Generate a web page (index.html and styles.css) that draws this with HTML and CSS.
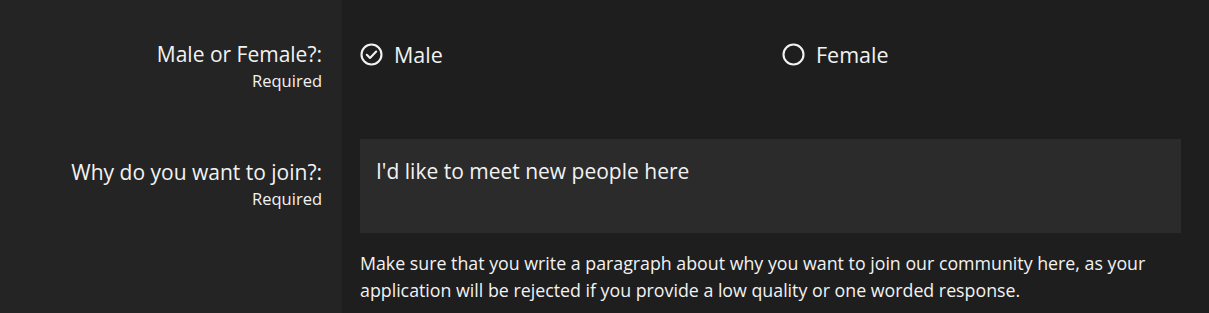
FILE: index.html
```html
<!DOCTYPE html>
<html>
<head>
<meta charset="utf-8">
<link rel="stylesheet" href="styles.css">
</head>
<body>
<div class="form">
  <div class="row row-radio">
    <div class="label">
      <div class="title">Male or Female?:</div>
      <div class="req">Required</div>
    </div>
    <div class="field">
      <div class="radios">
        <div class="radio">
          <svg class="icon" viewBox="0 0 23 23" width="23" height="23"><circle cx="11.5" cy="11.5" r="10" fill="none" stroke="#f2f2f2" stroke-width="2.1"/><path d="M6.8 11.8 L10 14.9 L16.2 8.6" fill="none" stroke="#f2f2f2" stroke-width="2.1" stroke-linecap="round" stroke-linejoin="round"/></svg>
          <span>Male</span>
        </div>
        <div class="radio">
          <svg class="icon" viewBox="0 0 23 23" width="23" height="23"><circle cx="11.5" cy="11.5" r="10" fill="none" stroke="#f2f2f2" stroke-width="2.1"/></svg>
          <span>Female</span>
        </div>
      </div>
    </div>
  </div>
  <div class="row row-text">
    <div class="label">
      <div class="title">Why do you want to join?:</div>
      <div class="req">Required</div>
    </div>
    <div class="field">
      <div class="textarea">I'd like to meet new people here</div>
      <p class="help">Make sure that you write a paragraph about why you want to join our community here, as your application will be rejected if you provide a low quality or one worded response.</p>
    </div>
  </div>
</div>
</body>
</html>
```

FILE: styles.css
```css
html, body {
  margin: 0;
  padding: 0;
  background: #1e1e1e;
}
body {
  font-family: "Open Sans", "Noto Sans", sans-serif;
  color: #f2f2f2;
  width: 1209px;
  height: 313px;
  overflow: hidden;
}
.form {
  display: flex;
  flex-direction: column;
}
.row {
  display: grid;
  grid-template-columns: 342px 1fr;
}
.label {
  background: #242424;
  padding-right: 20px;
  display: flex;
  flex-direction: column;
  align-items: flex-end;
  box-sizing: border-box;
}
.title {
  font-size: 21px;
  line-height: 28px;
  white-space: nowrap;
}
.req {
  font-size: 16.5px;
  line-height: 22px;
  margin-top: 2px;
}
.field {
  padding-left: 18px;
  padding-right: 28px;
}
.row-radio .label {
  padding-top: 40px;
  height: 99px;
}
.row-radio .field {
  padding-top: 41px;
}
.radios {
  display: grid;
  grid-template-columns: 422px 1fr;
}
.radio {
  display: flex;
  align-items: center;
  gap: 11px;
  font-size: 21.5px;
  line-height: 24px;
}
.radio span {
  padding-top: 2px;
}
.icon {
  display: block;
}
.row-text .label {
  padding-top: 59px;
  height: 214px;
}
.row-text .field {
  padding-top: 40px;
}
.textarea {
  background: #2b2b2b;
  height: 94px;
  box-sizing: border-box;
  padding: 18px 16px;
  font-size: 21px;
  line-height: 28px;
}
.help {
  margin: 17px -8px 0 0;
  font-size: 17.8px;
  line-height: 27px;
}
```
